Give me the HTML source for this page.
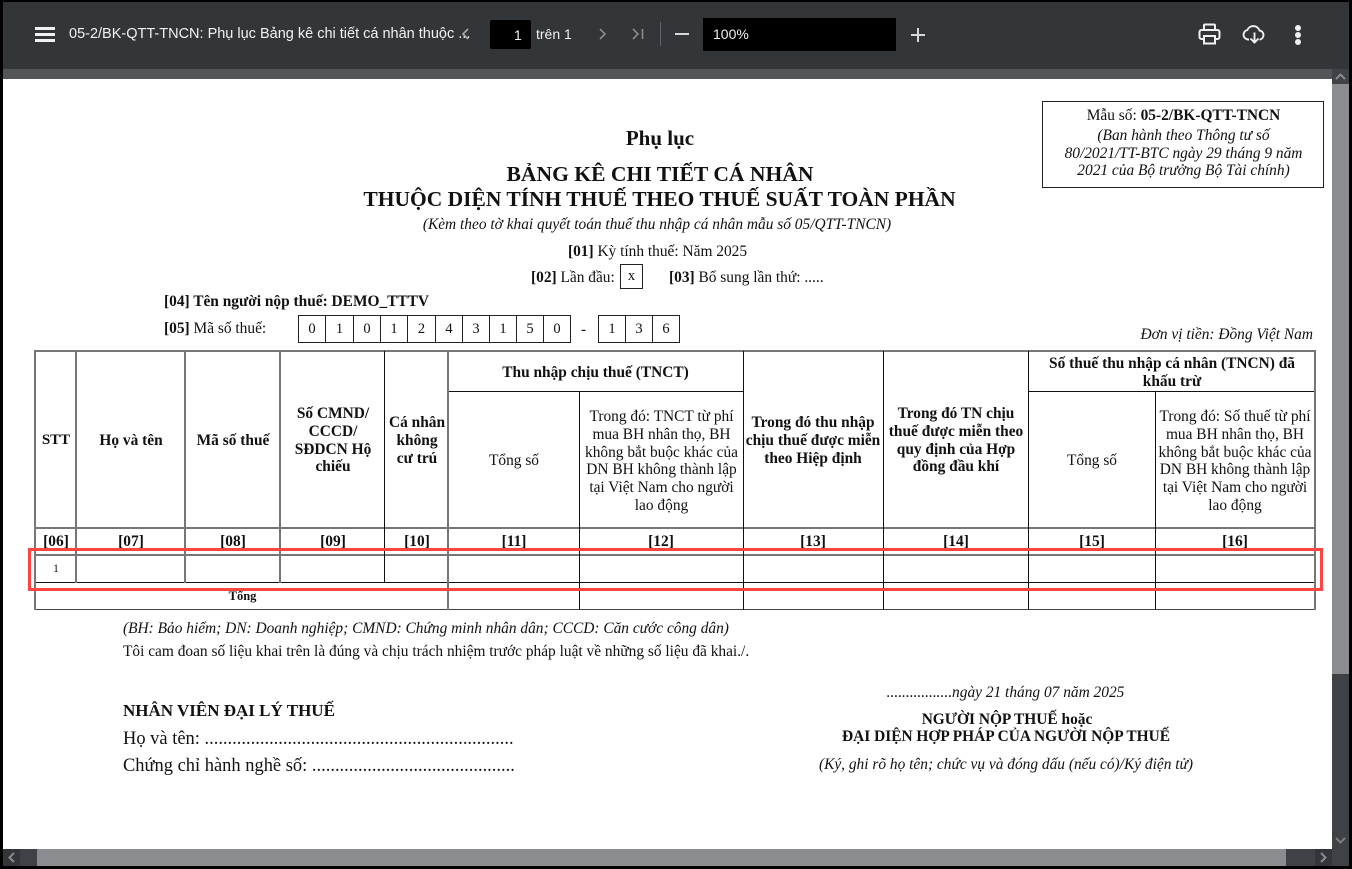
<!DOCTYPE html>
<html lang="vi"><head><meta charset="utf-8"><title>PDF</title>
<style>
html,body{margin:0;padding:0;width:1352px;height:869px;overflow:hidden;background:#000}
#r{position:relative;width:1352px;height:869px;overflow:hidden;font-family:"Liberation Serif",serif;color:#111}
#r div,#r svg{position:absolute}
.t{position:absolute;white-space:nowrap;line-height:1}
.c{position:absolute;white-space:nowrap;line-height:1;transform:translateX(-50%);text-align:center}
.s{font-size:15.4px}
.b{font-weight:bold}
.i{font-style:italic}
.v{background:#777;width:2px}
.h{background:#777;height:2px}
.k{background:#111;}
.m{position:absolute;white-space:nowrap;text-align:center;transform:translateX(-50%);font-size:15.4px;line-height:17.800px;font-weight:bold}
.n{font-weight:normal}
.box{position:absolute;border:1px solid #222;box-sizing:border-box;text-align:center;font-size:14.500px;line-height:26px}
.ui{font-family:"Liberation Sans",sans-serif;color:#f1f1f1;font-size:14px}
</style></head><body><div id="r">
<div style="left:3px;top:2px;width:1346px;height:67px;background:#323639"></div>
<div style="left:3px;top:69px;width:1329px;height:10px;background:#525659"></div>
<div style="left:3px;top:79px;width:1329px;height:770px;background:#fff"></div>

<!-- toolbar -->
<div style="left:35px;top:27px;width:20px;height:3px;background:#f1f1f1"></div>
<div style="left:35px;top:33px;width:20px;height:3px;background:#f1f1f1"></div>
<div style="left:35px;top:39px;width:20px;height:3px;background:#f1f1f1"></div>
<span class="t ui" style="left:69px;top:27px;font-size:14.500px">05-2/BK-QTT-TNCN: Phụ lục Bảng kê chi tiết cá nhân thuộc ...</span>
<svg style="left:458px;top:26px" width="14" height="16" viewBox="0 0 14 16"><path d="M10 3L5 8l5 5" fill="none" stroke="#aaa" stroke-width="1.6"/></svg>
<div style="left:490px;top:20px;width:41px;height:29px;background:#000;border-radius:2px"></div>
<span class="t ui" style="left:514px;top:28px;font-size:14px">1</span>
<span class="t ui" style="left:536px;top:27px;font-size:14px">trên 1</span>
<svg style="left:596px;top:26px" width="14" height="16" viewBox="0 0 14 16"><path d="M4 3l5 5-5 5" fill="none" stroke="#8a8c8e" stroke-width="1.6"/></svg>
<svg style="left:630px;top:26px" width="18" height="16" viewBox="0 0 18 16"><path d="M3 3l5 5-5 5M12.500 3v10" fill="none" stroke="#8a8c8e" stroke-width="1.6"/></svg>
<div style="left:660px;top:22px;width:1px;height:24px;background:#5f6266"></div>
<div style="left:675px;top:33px;width:14px;height:2px;background:#d8d8d8"></div>
<div style="left:703px;top:18px;width:193px;height:33px;background:#000"></div>
<span class="t ui" style="left:713px;top:27px;font-size:14px">100%</span>
<div style="left:911px;top:34px;width:14px;height:2px;background:#d8d8d8"></div>
<div style="left:917px;top:28px;width:2px;height:14px;background:#d8d8d8"></div>
<svg style="left:1198px;top:22px" width="23" height="24" viewBox="0 0 23 24"><path d="M6 8V3.500a1 1 0 0 1 1-1h9a1 1 0 0 1 1 1V8M5.500 17H3.500a2 2 0 0 1-2-2V10a2 2 0 0 1 2-2h16a2 2 0 0 1 2 2v5a2 2 0 0 1-2 2h-2M6 14h11v7.500H6z" fill="none" stroke="#f1f1f1" stroke-width="2"/></svg>
<svg style="left:1242px;top:23px" width="25" height="22" viewBox="0 0 25 22"><path d="M7 16.500H6a4.800 4.800 0 0 1-.6-9.500A6.500 6.500 0 0 1 17.500 7.500a4.600 4.600 0 0 1 .6 9H17.500M12.500 9.500v10M8.500 15.500l4 4 4-4" fill="none" stroke="#f1f1f1" stroke-width="1.900"/></svg>
<div style="left:1295px;top:25px;width:6px;height:6px;border-radius:50%;background:#f1f1f1"></div>
<div style="left:1295px;top:32px;width:6px;height:6px;border-radius:50%;background:#f1f1f1"></div>
<div style="left:1295px;top:39px;width:6px;height:6px;border-radius:50%;background:#f1f1f1"></div>

<!-- scrollbars -->
<div style="left:1332px;top:69px;width:17px;height:780px;background:#3e4145"></div>
<div style="left:1332px;top:84px;width:17px;height:590px;background:#8b8c8f"></div>
<svg style="left:1332px;top:69px" width="17" height="15" viewBox="0 0 17 15"><path d="M4 10l4.500-4.500L13 10" fill="none" stroke="#8b8c8f" stroke-width="2"/></svg>
<svg style="left:1332px;top:832px" width="17" height="17" viewBox="0 0 17 17"><path d="M4 6l4.500 4.500L13 6" fill="none" stroke="#7b7d80" stroke-width="2"/></svg>
<div style="left:3px;top:849px;width:1346px;height:17px;background:#3e4145"></div>
<div style="left:37px;top:849px;width:1249px;height:17px;background:#8b8c8f"></div>
<div style="left:3px;top:849px;width:17px;height:17px;background:#323539"></div>
<div style="left:1315px;top:849px;width:17px;height:17px;background:#323539"></div>
<svg style="left:3px;top:849px" width="17" height="17" viewBox="0 0 17 17"><path d="M11 4L6.500 8.500 11 13" fill="none" stroke="#8b8c8f" stroke-width="2"/></svg>
<svg style="left:1315px;top:849px" width="17" height="17" viewBox="0 0 17 17"><path d="M6 4l4.500 4.500L6 13" fill="none" stroke="#8b8c8f" stroke-width="2"/></svg>

<!-- header box -->
<div style="left:1042px;top:101px;width:282px;height:87px;border:1px solid #222;box-sizing:border-box"></div>
<span class="c s" style="left:1183.500px;top:108px">Mẫu số: <b>05-2/BK-QTT-TNCN</b></span>
<span class="c s i" style="left:1183.500px;top:128px">(Ban hành theo Thông tư số</span>
<span class="c s i" style="left:1183.500px;top:146px">80/2021/TT-BTC ngày 29 tháng 9 năm</span>
<span class="c s i" style="left:1183.500px;top:163px">2021 của Bộ trưởng Bộ Tài chính)</span>

<span class="c b" style="left:660px;top:128px;font-size:21px">Phụ lục</span>
<span class="c b" style="left:660px;top:164px;font-size:21.600px">BẢNG KÊ CHI TIẾT CÁ NHÂN</span>
<span class="c b" style="left:659.500px;top:189px;font-size:21.500px">THUỘC DIỆN TÍNH THUẾ THEO THUẾ SUẤT TOÀN PHẦN</span>
<span class="c i s" style="left:657px;top:217px">(Kèm theo tờ khai quyết toán thuế thu nhập cá nhân mẫu số 05/QTT-TNCN)</span>
<span class="c s" style="left:657.500px;top:244px"><b>[01]</b> Kỳ tính thuế: Năm 2025</span>
<span class="t s" style="left:531px;top:270px"><b>[02]</b> Lần đầu:</span>
<div class="box" style="left:620px;top:264px;width:23px;height:25px;line-height:23px">x</div>
<span class="t s" style="left:669px;top:270px"><b>[03]</b> Bổ sung lần thứ: .....</span>
<span class="t b s" style="left:164px;top:294px">[04] Tên người nộp thuế: DEMO_TTTV</span>
<span class="t s" style="left:164px;top:321px"><b>[05]</b> Mã số thuế:</span>

<div class="box" style="left:298px;top:315px;width:28px;height:28px">0</div>
<div class="box" style="left:325px;top:315px;width:29px;height:28px">1</div>
<div class="box" style="left:353px;top:315px;width:28px;height:28px">0</div>
<div class="box" style="left:380px;top:315px;width:28px;height:28px">1</div>
<div class="box" style="left:407px;top:315px;width:29px;height:28px">2</div>
<div class="box" style="left:435px;top:315px;width:28px;height:28px">4</div>
<div class="box" style="left:462px;top:315px;width:28px;height:28px">3</div>
<div class="box" style="left:489px;top:315px;width:28px;height:28px">1</div>
<div class="box" style="left:516px;top:315px;width:28px;height:28px">5</div>
<div class="box" style="left:543px;top:315px;width:28px;height:28px">0</div>
<span class="t s" style="left:581px;top:322px">-</span>
<div class="box" style="left:598px;top:315px;width:28px;height:28px">1</div>
<div class="box" style="left:625px;top:315px;width:28px;height:28px">3</div>
<div class="box" style="left:652px;top:315px;width:28px;height:28px">6</div>
<span class="t i s" style="right:39px;top:327px">Đơn vị tiền: Đồng Việt Nam</span>

<!-- table lines -->
<div class="h" style="left:34px;top:350px;width:1282px"></div>
<div class="h k" style="left:448px;top:391px;width:295px;height:1px"></div>
<div class="h k" style="left:1028px;top:391px;width:287px;height:1px"></div>
<div class="h" style="left:34px;top:527px;width:1282px"></div>
<div class="h" style="left:34px;top:554px;width:1282px"></div>
<div class="h k" style="left:35px;top:582px;width:1280px;height:1px"></div>
<div class="h k" style="left:35px;top:609px;width:1280px;height:1px;background:#444"></div>
<div class="v" style="left:34px;top:350px;height:260px"></div>
<div class="v" style="left:75px;top:350px;height:233px"></div>
<div class="v" style="left:184px;top:350px;height:233px"></div>
<div class="v" style="left:279px;top:350px;height:233px"></div>
<div class="v k" style="left:384px;top:351px;height:232px;width:1px"></div>
<div class="v" style="left:447px;top:350px;height:260px"></div>
<div class="v k" style="left:579px;top:391px;height:219px;width:1px"></div>
<div class="v k" style="left:743px;top:351px;height:259px;width:1px"></div>
<div class="v k" style="left:883px;top:351px;height:259px;width:1px"></div>
<div class="v k" style="left:1028px;top:351px;height:259px;width:1px"></div>
<div class="v k" style="left:1155px;top:391px;height:219px;width:1px"></div>
<div class="v" style="left:1314px;top:350px;height:260px"></div>

<!-- table headers -->
<span class="m" style="left:56px;top:432px;font-size:15px">STT</span>
<span class="m" style="left:131px;top:432px">Họ và tên</span>
<span class="m" style="left:233px;top:432px">Mã số thuế</span>
<span class="m" style="left:333px;top:405px">Số CMND/<br>CCCD/<br>SĐDCN Hộ<br>chiếu</span>
<span class="m" style="left:417px;top:414px">Cá nhân<br>không<br>cư trú</span>
<span class="m" style="left:595.500px;top:364px">Thu nhập chịu thuế (TNCT)</span>
<span class="m n" style="left:514px;top:452px">Tổng số</span>
<span class="m n" style="left:661.500px;top:408px">Trong đó: TNCT từ phí<br>mua BH nhân thọ, BH<br>không bắt buộc khác của<br>DN BH không thành lập<br>tại Việt Nam cho người<br>lao động</span>
<span class="m" style="left:813px;top:414px">Trong đó thu nhập<br>chịu thuế được miễn<br>theo Hiệp định</span>
<span class="m" style="left:956px;top:405px">Trong đó TN chịu<br>thuế được miễn theo<br>quy định của Hợp<br>đồng đầu khí</span>
<span class="m" style="left:1172px;top:355px">Số thuế thu nhập cá nhân (TNCN) đã<br>khấu trừ</span>
<span class="m n" style="left:1092px;top:452px">Tổng số</span>
<span class="m n" style="left:1235px;top:408px">Trong đó: Số thuế từ phí<br>mua BH nhân thọ, BH<br>không bắt buộc khác của<br>DN BH không thành lập<br>tại Việt Nam cho người<br>lao động</span>

<span class="m" style="left:56px;top:533px">[06]</span>
<span class="m" style="left:131px;top:533px">[07]</span>
<span class="m" style="left:233px;top:533px">[08]</span>
<span class="m" style="left:333px;top:533px">[09]</span>
<span class="m" style="left:417px;top:533px">[10]</span>
<span class="m" style="left:514px;top:533px">[11]</span>
<span class="m" style="left:661px;top:533px">[12]</span>
<span class="m" style="left:813px;top:533px">[13]</span>
<span class="m" style="left:956px;top:533px">[14]</span>
<span class="m" style="left:1092px;top:533px">[15]</span>
<span class="m" style="left:1235px;top:533px">[16]</span>
<span class="c" style="left:56px;top:564px;font-size:11.500px">1</span>
<span class="c b" style="left:242.500px;top:590px;font-size:12.500px">Tổng</span>

<!-- footer -->
<span class="t i s" style="left:123px;top:621px">(BH: Bảo hiểm; DN: Doanh nghiệp; CMND: Chứng minh nhân dân; CCCD: Căn cước công dân)</span>
<span class="t s" style="left:123px;top:644px">Tôi cam đoan số liệu khai trên là đúng và chịu trách nhiệm trước pháp luật về những số liệu đã khai./.</span>
<span class="t b" style="left:123px;top:702px;font-size:17px">NHÂN VIÊN ĐẠI LÝ THUẾ</span>
<span class="t" style="left:123px;top:729px;font-size:18.470px">Họ và tên: ...................................................................</span>
<span class="t" style="left:123px;top:756px;font-size:18.470px">Chứng chỉ hành nghề số: ............................................</span>
<span class="c i s" style="left:1005.500px;top:685px">.................ngày 21 tháng 07 năm 2025</span>
<span class="c b s" style="left:1007px;top:712px">NGƯỜI NỘP THUẾ hoặc</span>
<span class="c b s" style="left:1006px;top:729px">ĐẠI DIỆN HỢP PHÁP CỦA NGƯỜI NỘP THUẾ</span>
<span class="c i s" style="left:1006px;top:757px">(Ký, ghi rõ họ tên; chức vụ và đóng dấu (nếu có)/Ký điện tử)</span>

<!-- highlight -->
<div style="left:28px;top:548px;width:1295px;height:43px;box-sizing:border-box;border:3px solid #ff4444"></div>
</div></body></html>
